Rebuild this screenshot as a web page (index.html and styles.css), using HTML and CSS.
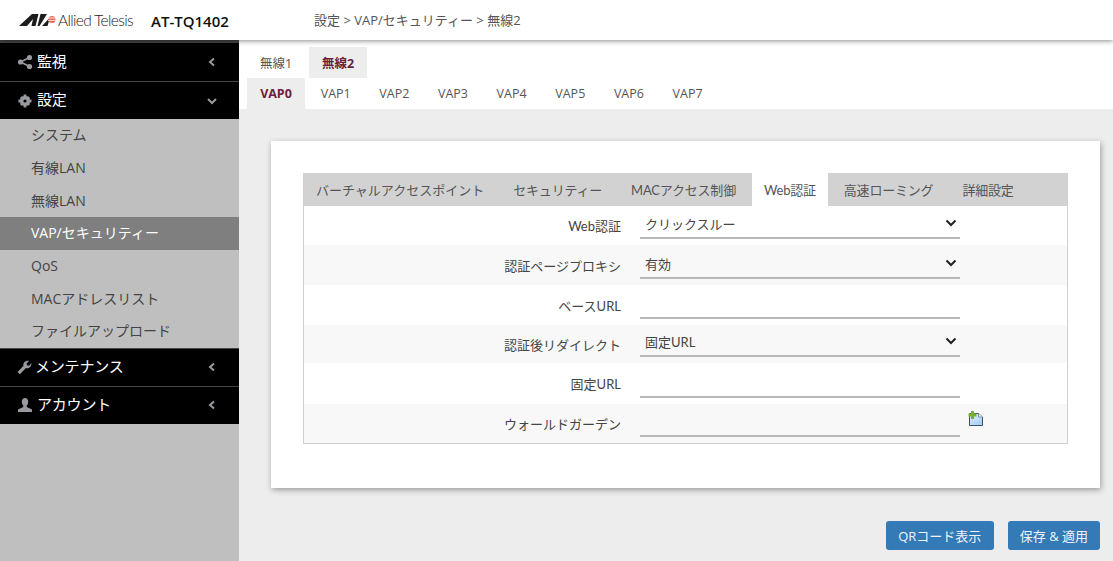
FILE: index.html
```html
<!DOCTYPE html>
<html lang="ja">
<head>
<meta charset="utf-8">
<title>AT-TQ1402</title>
<link rel="stylesheet" href="styles.css">
</head>
<body>
<header class="topbar">
  <div class="logo">
    <svg class="logo-mark" width="37" height="12" viewBox="0 0 37 12"><path d="M0 12 L13 0 H19.5 L16.5 12 H12.5 L14 5 L8 12Z" fill="#1c1c1c"/><path d="M18.5 12 L21.5 0 H28 L20.5 12Z" fill="#1c1c1c"/><path d="M23 12 L31 3.5 L28.5 12Z" fill="#1c1c1c"/><circle cx="33" cy="5.5" r="3.6" fill="#ea6a5a"/><path d="M29 4h8M29 6.4h8" stroke="#fff" stroke-width=".8"/></svg>
    <span class="logo-text">Allied Telesis</span>
  </div>
  <div class="model">AT-TQ1402</div>
  <div class="crumb">設定 &gt; VAP/セキュリティー &gt; 無線2</div>
</header>
<div class="body">
  <aside class="side">
    <div class="nav-head first">
      <svg class="nav-icon" width="16" height="16" viewBox="0 0 16 16"><path d="M12.5 3.5 L3.5 8 L12.5 12.5" fill="none" stroke="#999aa0" stroke-width="1.6"/><circle cx="12.5" cy="3.5" r="2.6" fill="#999aa0"/><circle cx="3.5" cy="8" r="2.6" fill="#999aa0"/><circle cx="12.5" cy="12.5" r="2.6" fill="#999aa0"/></svg>
      <span class="nav-label">監視</span>
      <svg class="chev" width="10" height="10" viewBox="0 0 10 10"><path d="M7 1.5 L3 5 L7 8.5" fill="none" stroke="#999aa0" stroke-width="2"/></svg>
    </div>
    <div class="nav-head">
      <svg class="nav-icon" width="16" height="16" viewBox="0 0 16 16"><g fill="#999aa0"><circle cx="8" cy="8" r="5"/><path d="M6.6 1.5h2.8v13H6.6z M1.5 6.6h13v2.8h-13z M2.9 5 L5 2.9 L13.1 11 L11 13.1Z M11 2.9 L13.1 5 L5 13.1 L2.9 11Z"/></g><circle cx="8" cy="8" r="1.6" fill="#000"/></svg>
      <span class="nav-label">設定</span>
      <svg class="chev" width="10" height="10" viewBox="0 0 10 10"><path d="M1 3 L5 7 L9 3" fill="none" stroke="#999aa0" stroke-width="2"/></svg>
    </div>
    <nav class="sub">
      <a class="sub-item">システム</a>
      <a class="sub-item">有線LAN</a>
      <a class="sub-item">無線LAN</a>
      <a class="sub-item active">VAP/セキュリティー</a>
      <a class="sub-item">QoS</a>
      <a class="sub-item">MACアドレスリスト</a>
      <a class="sub-item">ファイルアップロード</a>
    </nav>
    <div class="nav-head">
      <svg class="nav-icon tight" width="16" height="16" viewBox="0 0 16 16"><path d="M1.5 13 L7.5 6.8 C6.8 4 9.5 1.2 13 2 L10.5 4.6 L11.4 6.4 L13.2 6.8 L15.4 4 C15.8 7.6 12.8 10 10 9 L3.8 15.2 Z" fill="#999aa0"/></svg>
      <span class="nav-label">メンテナンス</span>
      <svg class="chev" width="10" height="10" viewBox="0 0 10 10"><path d="M7 1.5 L3 5 L7 8.5" fill="none" stroke="#999aa0" stroke-width="2"/></svg>
    </div>
    <div class="nav-head">
      <svg class="nav-icon" width="16" height="16" viewBox="0 0 16 16"><path d="M8 1 C10.2 1 11.2 2.8 11.2 4.8 C11.2 6.8 10.2 8.2 9.6 8.8 L9.8 10 L15 12.4 V15 H1 V12.4 L6.2 10 L6.4 8.8 C5.8 8.2 4.8 6.8 4.8 4.8 C4.8 2.8 5.8 1 8 1Z" fill="#999aa0"/></svg>
      <span class="nav-label">アカウント</span>
      <svg class="chev" width="10" height="10" viewBox="0 0 10 10"><path d="M7 1.5 L3 5 L7 8.5" fill="none" stroke="#999aa0" stroke-width="2"/></svg>
    </div>
  </aside>
  <main class="main">
    <div class="tabs-wrap">
      <div class="tabs radios">
        <span class="tab">無線1</span>
        <span class="tab on">無線2</span>
      </div>
      <div class="tabs vaps">
        <span class="tab on">VAP0</span>
        <span class="tab">VAP1</span>
        <span class="tab">VAP2</span>
        <span class="tab">VAP3</span>
        <span class="tab">VAP4</span>
        <span class="tab">VAP5</span>
        <span class="tab">VAP6</span>
        <span class="tab">VAP7</span>
      </div>
    </div>
    <section class="card">
      <div class="panel">
        <div class="ptabs">
          <span class="ptab">バーチャルアクセスポイント</span>
          <span class="ptab">セキュリティー</span>
          <span class="ptab">MACアクセス制御</span>
          <span class="ptab on">Web認証</span>
          <span class="ptab">高速ローミング</span>
          <span class="ptab">詳細設定</span>
        </div>
        <div class="row r1">
          <label class="lbl">Web認証</label>
          <div class="field select"><span>クリックスルー</span><svg class="caret" width="12" height="8" viewBox="0 0 12 8"><path d="M1.5 1.5 L6 6 L10.5 1.5" fill="none" stroke="#222" stroke-width="2"/></svg></div>
        </div>
        <div class="row r2 alt">
          <label class="lbl">認証ページプロキシ</label>
          <div class="field select"><span>有効</span><svg class="caret" width="12" height="8" viewBox="0 0 12 8"><path d="M1.5 1.5 L6 6 L10.5 1.5" fill="none" stroke="#222" stroke-width="2"/></svg></div>
        </div>
        <div class="row r3">
          <label class="lbl">ベースURL</label>
          <div class="field"></div>
        </div>
        <div class="row r4 alt">
          <label class="lbl">認証後リダイレクト</label>
          <div class="field select"><span>固定URL</span><svg class="caret" width="12" height="8" viewBox="0 0 12 8"><path d="M1.5 1.5 L6 6 L10.5 1.5" fill="none" stroke="#222" stroke-width="2"/></svg></div>
        </div>
        <div class="row r5">
          <label class="lbl">固定URL</label>
          <div class="field"></div>
        </div>
        <div class="row r6 alt">
          <label class="lbl">ウォールドガーデン</label>
          <div class="field"></div>
          <svg class="add" width="15" height="15" viewBox="0 0 15 15"><defs><linearGradient id="pg" x1="0" y1="0" x2="0.6" y2="1"><stop offset="0" stop-color="#eaf4fd"/><stop offset="1" stop-color="#a6d0f6"/></linearGradient></defs><path d="M1.5 2.5 H10.5 L14.5 6 V14.5 H1.5Z" fill="url(#pg)" stroke="#3c5068"/><path d="M10.5 2.5 V6 H14.5" fill="#f2f8fe" stroke="#7d8fa5"/><path d="M3 0 h3 v2.5 h2.5 v3 H6 V8 H3 V5.5 H0.5 v-3 H3Z" fill="#79b02a"/></svg>
        </div>
      </div>
    </section>
    <div class="actions">
      <button class="btn">QRコード表示</button>
      <button class="btn">保存 &amp; 適用</button>
    </div>
  </main>
</div>
</body>
</html>
```
FILE: styles.css
```css
* { box-sizing: border-box; }
html, body { margin: 0; padding: 0; height: 100%; overflow: hidden; }
body {
  font-family: "Open Sans", "Noto Sans CJK JP", sans-serif;
  font-size: 13px;
  color: #555;
  background: #ededed;
  width: 1113px;
  height: 561px;
  position: relative;
}
.topbar {
  height: 40px;
  background: #fff;
  display: flex;
  align-items: center;
  position: relative;
  z-index: 2;
  box-shadow: 0 1px 5px rgba(0,0,0,.45);
}
.logo { display: flex; align-items: center; margin-left: 19px; width: 132px; }
.logo-mark { flex: none; }
.logo-text {
  font-family: "Lato", sans-serif;
  font-weight: 300;
  font-size: 15.5px;
  letter-spacing: -.65px;
  color: #222;
  margin-left: 2px;
  white-space: nowrap;
}
.model {
  font-weight: 600;
  font-size: 15px;
  color: #111;
  width: 163px;
  margin-top: 2px;
}
.crumb { font-size: 13px; color: #555; margin-top: -1px; }
.body { display: flex; height: 521px; }
.side { width: 239px; flex: none; background: #bfbfbf; }
.nav-head {
  height: 38px;
  background: #000;
  color: #fff;
  display: flex;
  align-items: center;
  padding: 0 22px 0 17px;
  font-size: 15px;
  border-top: 1px solid #444;
}
.nav-head.first { height: 41px; border-top-width: 3px; }
.nav-icon { flex: none; margin-right: 4px; }
.nav-icon.tight { margin-right: 3px; margin-left: -1px; }
.nav-label { flex: 1; line-height: 20px; margin-bottom: 3px; letter-spacing: -.2px; }
.chev { flex: none; }
.sub { display: flex; flex-direction: column; }
.sub-item {
  height: 32.7px;
  padding-left: 31px;
  padding-bottom: 2px;
  display: flex;
  align-items: center;
  font-size: 14px;
  color: #444;
}
.sub-item.active { background: #7f7f7f; color: #fff; }
.main { flex: 1; display: flex; flex-direction: column; min-width: 0; }
.tabs-wrap { background: #fff; height: 69px; padding: 7px 0 0 8px; }
.tabs { display: flex; height: 31px; align-items: stretch; }
.tab {
  display: flex;
  align-items: center;
  justify-content: center;
  width: 58px;
  font-size: 12.5px;
  color: #555;
}
.radios { gap: 4px; }
.vaps .tab { width: 58.65px; }
.vaps .tab.on { width: 58px; margin-right: 1.4px; }
.tab.on { background: #ededed; color: #6b1f3a; font-weight: 700; }
.card {
  margin: 32px 0 0 32px;
  width: 829px;
  height: 347px;
  background: #fff;
  box-shadow: 1px 2px 6px rgba(0,0,0,.35);
  padding: 32px 32px 0;
}
.panel { border: 1px solid #d0d0d0; height: 271px; border-top: 0; }
.ptabs { display: flex; height: 33px; background: #d2d2d2; padding-left: 0; }
.ptab {
  padding: 0 14.5px;
  display: flex;
  align-items: center;
  font-family: "Lato", "Noto Sans CJK JP", sans-serif;
  font-size: 13px;
  letter-spacing: -.2px;
  color: #555;
  white-space: nowrap;
}
.ptab:first-child { padding-left: 12px; letter-spacing: 0; }
.ptab.on { background: #fff; padding: 0 12px; margin: 0 1.5px; }
.row { display: flex; align-items: center; position: relative; }
.r1 { height: 39px; }
.r2 { height: 40px; }
.r3 { height: 40px; }
.r4 { height: 38px; }
.r5 { height: 41px; }
.r6 { height: 39px; }
.alt { background: #f8f8f8; }
.lbl {
  width: 317px;
  text-align: right;
  font-family: "Lato", "Noto Sans CJK JP", sans-serif;
  font-size: 13px;
  color: #444;
  flex: none;
}
.field {
  width: 320px;
  height: 26px;
  margin-left: 19px;
  border-bottom: 2px solid #b8b8b8;
  display: flex;
  align-items: center;
  justify-content: space-between;
  padding: 0 3px 4px 5px;
  font-family: "Lato", "Noto Sans CJK JP", sans-serif;
  font-size: 13px;
  color: #444;
  align-self: flex-end;
  margin-bottom: 6px;
}
.add { position: absolute; left: 664px; top: 7px; }
.actions {
  display: flex;
  justify-content: flex-end;
  gap: 14px;
  padding-right: 13px;
  margin-top: 33px;
}
.btn {
  height: 29px;
  border: 0;
  border-radius: 3px;
  background: #337ab7;
  color: #f0f4f8;
  font-family: inherit;
  font-size: 13px;
  padding: 0 12px;
}
.btn:first-child { padding: 0 12.5px; }
```
